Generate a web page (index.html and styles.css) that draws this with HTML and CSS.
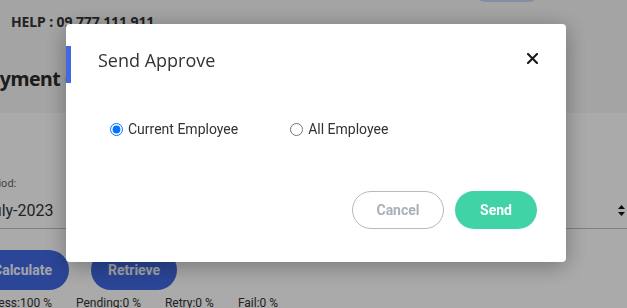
FILE: index.html
```html
<!DOCTYPE html>
<html>
<head>
<meta charset="utf-8">
<link rel="stylesheet" href="styles.css">
</head>
<body>
<div class="page">
  <header class="topbar">
    <span class="help">HELP : 09 777 111 911</span>
    <span class="top-pill"></span>
  </header>
  <main class="content">
    <h1 class="title">Payment Calculation</h1>
    <section class="card">
      <div class="field">
        <label class="field-label">Period:</label>
        <div class="select">
          <span class="select-value">July-2023</span>
          <svg class="sort" width="7" height="11" viewBox="0 0 7 11"><path d="M3.5 0 L7 4 H0 Z M0 7 H7 L3.5 11 Z" fill="#111"/></svg>
        </div>
      </div>
      <div class="actions">
        <button class="btn-blue">Calculate</button>
        <button class="btn-blue">Retrieve</button>
      </div>
      <div class="status">
        <span>Success:100 %</span>
        <span>Pending:0 %</span>
        <span>Retry:0 %</span>
        <span>Fail:0 %</span>
      </div>
    </section>
  </main>
</div>
<div class="backdrop"></div>
<div class="modal">
  <div class="modal-header">
    <span class="accent"></span>
    <h2 class="modal-title">Send Approve</h2>
    <button class="close" aria-label="Close">
      <svg width="11" height="11" viewBox="0 0 11 11"><path d="M1 1 L10 10 M10 1 L1 10" stroke="#1a1a1a" stroke-width="2.1" stroke-linecap="square"/></svg>
    </button>
  </div>
  <div class="modal-body">
    <label class="radio"><input type="radio" name="emp" checked><span>Current Employee</span></label>
    <label class="radio"><input type="radio" name="emp"><span>All Employee</span></label>
  </div>
  <div class="modal-footer">
    <button class="btn-cancel">Cancel</button>
    <button class="btn-send">Send</button>
  </div>
</div>
</body>
</html>
```
FILE: styles.css
```css
* { box-sizing: border-box; }
html, body { margin: 0; padding: 0; }
body {
  width: 627px;
  height: 308px;
  overflow: hidden;
  background: #f6f6f7;
  font-family: Roboto, "Liberation Sans", sans-serif;
  position: relative;
}
.page { width: 627px; }
.topbar {
  height: 43px;
  display: flex;
  align-items: center;
  padding-left: 11px;
}
.help {
  font-family: "Noto Sans", "Open Sans", sans-serif;
  font-weight: 700;
  font-size: 14px;
  letter-spacing: -0.1px;
  color: #333;
}
.top-pill {
  align-self: flex-start;
  margin-left: auto;
  margin-right: 82px;
  width: 76px;
  height: 36px;
  margin-top: -34px;
  border-radius: 18px;
  background: #c4d6f4;
}
.content {
  margin-left: -26px;
}
.title {
  margin: 0 0 0 3px;
  height: 70px;
  padding-top: 22px;
  font-family: "Noto Sans", "Open Sans", sans-serif;
  font-weight: 700;
  font-size: 19.5px;
  letter-spacing: -0.5px;
  line-height: 28px;
  color: #2a2a2a;
  white-space: nowrap;
}
.card {
  background: #ffffff;
  padding-top: 64px;
  width: 700px;
  height: 200px;
}
.field { padding-left: 8px; }
.field-label {
  display: block;
  font-size: 11px;
  line-height: 14px;
  color: #666;
}
.select {
  display: flex;
  align-items: center;
  height: 36px;
  margin-left: -8px;
  padding-left: 10px;
  width: 679px;
  padding-right: 28px;
  border-bottom: 1px solid #bcbdd0;
  margin-top: 2px;
}
.select-value {
  font-size: 16px;
  color: #333;
  flex: 1;
}
.sort { display: block; }
.actions {
  display: flex;
  gap: 22px;
  margin-top: 21px;
  padding-left: 2px;
}
.btn-blue {
  height: 40px;
  padding: 0 17px;
  border: none;
  border-radius: 20px;
  background: #4169e3;
  color: #f4f6ff;
  font-family: Roboto, sans-serif;
  font-weight: 700;
  font-size: 14px;
}
.status {
  display: flex;
  gap: 24px;
  margin-top: 6px;
  margin-left: -2px;
  font-size: 12px;
  line-height: 14px;
  color: #333;
}
.backdrop {
  position: fixed;
  inset: 0;
  background: rgba(0, 0, 0, 0.335);
}
.modal {
  position: fixed;
  left: 66px;
  top: 24px;
  width: 500px;
  height: 238px;
  background: #fff;
  border-radius: 4px;
  box-shadow: 0 4px 22px rgba(0, 0, 0, 0.32);
  display: flex;
  flex-direction: column;
}
.modal-header {
  display: flex;
  align-items: flex-start;
  height: 81px;
  position: relative;
  padding-left: 32px;
  padding-right: 28px;
}
.accent {
  position: absolute;
  left: 0;
  top: 22px;
  width: 5px;
  height: 37px;
  background: #4169e1;
}
.modal-title {
  margin: 24px 0 0 0;
  flex: 1;
  font-family: "Open Sans", "Noto Sans", sans-serif;
  font-weight: 400;
  font-size: 18px;
  line-height: 24px;
  color: #333;
}
.close {
  border: none;
  background: none;
  padding: 0;
  width: 11px;
  height: 11px;
  margin-top: 29px;
  display: flex;
}
.modal-body {
  display: flex;
  gap: 52px;
  padding-left: 44px;
  padding-top: 16px;
}
.radio {
  display: flex;
  align-items: center;
  font-size: 14px;
  line-height: 17px;
  color: #333;
}
.radio input {
  margin: 0 5px 0 0;
  width: 13px;
  height: 13px;
}
.modal-footer {
  display: flex;
  justify-content: flex-end;
  gap: 11px;
  padding-right: 29px;
  margin-top: 53px;
}
.btn-cancel, .btn-send {
  height: 38px;
  border-radius: 19px;
  font-family: Roboto, sans-serif;
  font-weight: 700;
  font-size: 14px;
}
.btn-cancel {
  width: 92px;
  background: #fff;
  border: 1px solid #b3b9c5;
  color: #a9afbb;
}
.btn-send {
  width: 82px;
  border: none;
  background: #40d3a6;
  color: #fff;
}
```
